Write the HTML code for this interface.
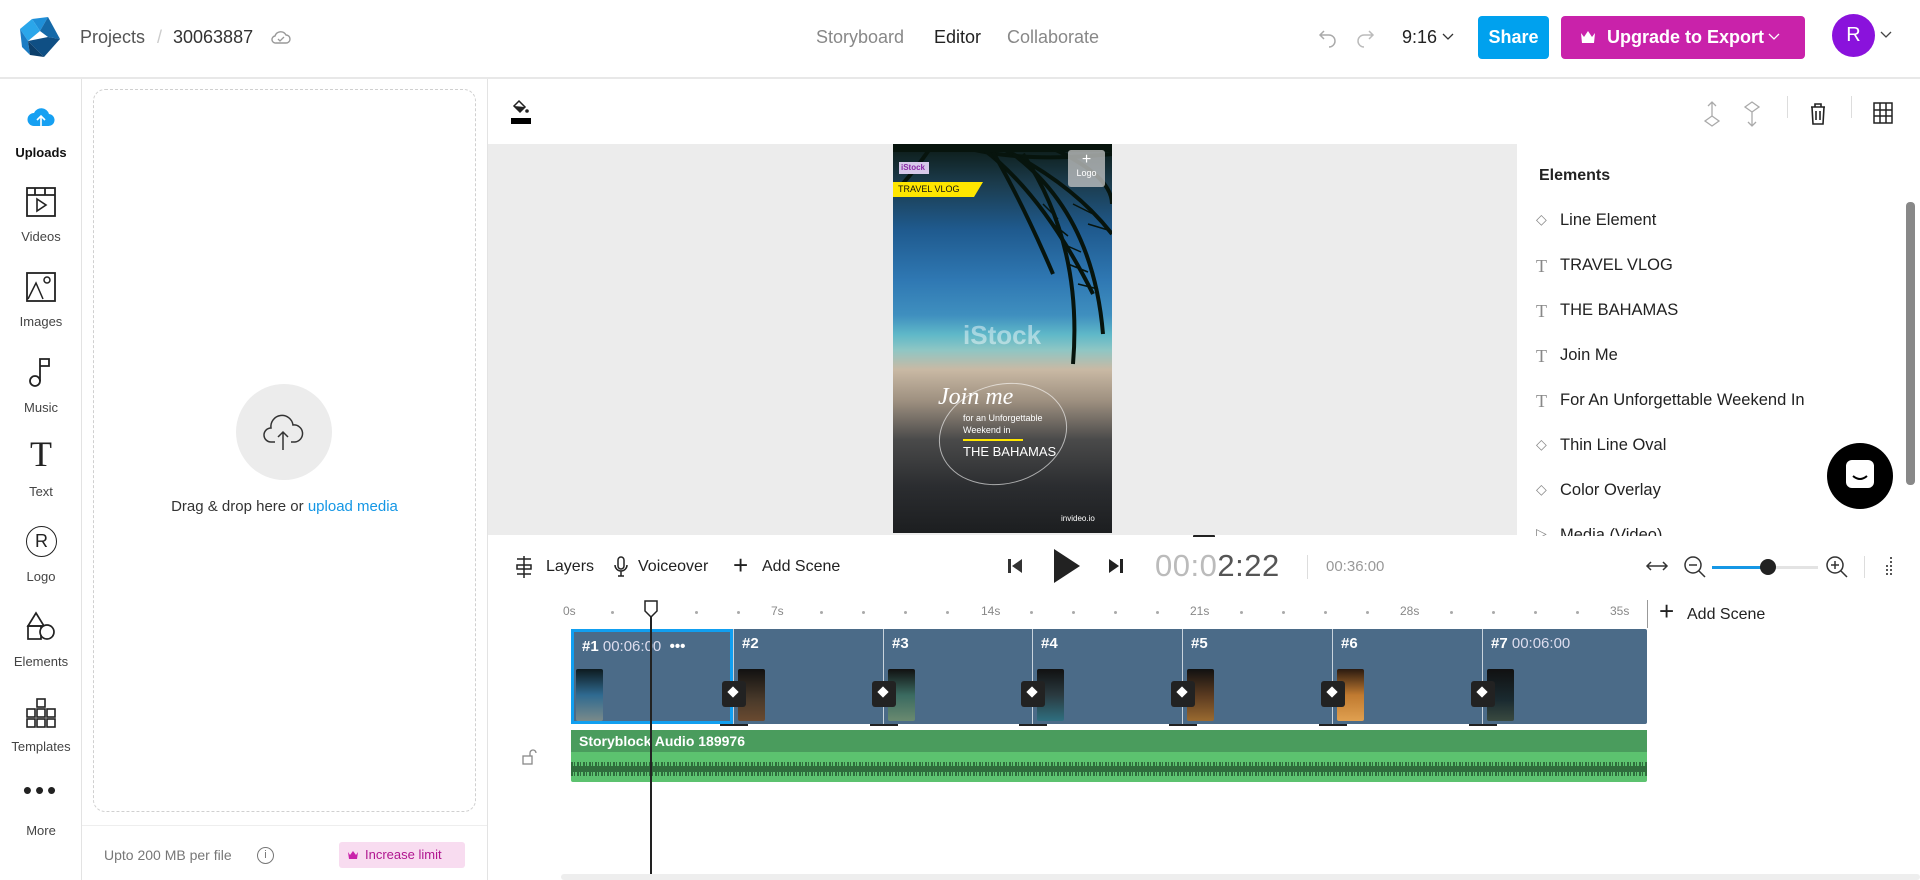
<!DOCTYPE html>
<html><head><meta charset="utf-8"><style>
*{box-sizing:border-box;margin:0;padding:0}
body{width:1920px;height:880px;overflow:hidden;background:#fff;font-family:"Liberation Sans",sans-serif;color:#222;position:relative}
.a{position:absolute}
.hdr{left:0;top:0;width:1920px;height:79px;border-bottom:2px solid #e8e8e8}
.nav{font-size:18px;top:27px}
.side{left:0;top:79px;width:82px;height:801px;border-right:1px solid #e3e3e3}
.si{position:absolute;left:0;width:82px;text-align:center;font-size:13px;color:#444}
.ic{position:absolute;left:25px;width:32px;height:32px}
.el{position:absolute;left:1536px;font-size:16.5px;color:#222}
.el span{position:absolute;left:24px;top:0;white-space:nowrap}
.el i{position:absolute;left:0;top:0;font-style:normal;color:#888;font-family:"Liberation Serif",serif;font-size:18px}
.sc{position:absolute;top:629px;height:95px;border-left:1px solid #c8d3dc;color:#fff;font-weight:bold;font-size:15px}
.sc b{position:absolute;left:8px;top:6px;white-space:nowrap}
.th{position:absolute;top:40px;left:4px;width:27px;height:52px;border-radius:2px}
.ly{position:absolute;top:52px;left:-12px;width:24px;height:26px;background:#222;border-radius:3px}
.ly:after{content:"";position:absolute;left:7px;top:7px;width:8px;height:8px;background:#fff;transform:rotate(45deg)}
.tick{position:absolute;top:724px;width:28px;height:2px;background:#222}
.dot{position:absolute;top:611px;width:3px;height:3px;border-radius:50%;background:#aaa}
.rl{position:absolute;top:604px;font-size:12px;color:#888}
</style></head><body>

<div class="a hdr"></div>
<svg class="a" style="left:18px;top:17px" width="44" height="42" viewBox="0 0 44 42"><path d="M14 2 L30 0 L22 14 Z" fill="#1f8fd8"/><path d="M2 12 L14 2 L22 14 L10 24 Z" fill="#2aa6ea"/><path d="M22 14 L30 0 L42 22 L30 20 Z" fill="#1569a8"/><path d="M10 24 L30 20 L42 22 L26 40 Z" fill="#0f4f84"/><path d="M2 12 L10 24 L12 38 L4 30 Z" fill="#1b7cc4"/><path d="M12 38 L26 40 L10 24 Z" fill="#0c3f6b"/></svg>
<div class="a nav" style="left:80px;color:#555">Projects</div>
<div class="a nav" style="left:157px;color:#ccc">/</div>
<div class="a nav" style="left:173px;color:#333">30063887</div>
<svg class="a" style="left:271px;top:29px" width="20" height="16" viewBox="0 0 20 16"><path d="M5 14 H15 A4 4 0 0 0 15 6 A6 6 0 0 0 4 7 A3.5 3.5 0 0 0 5 14Z" fill="none" stroke="#999" stroke-width="1.4"/><path d="M7 10 L9 12 L13 8" fill="none" stroke="#999" stroke-width="1.3"/></svg>
<div class="a nav" style="left:816px;color:#888">Storyboard</div>
<div class="a nav" style="left:934px;color:#222">Editor</div>
<div class="a nav" style="left:1007px;color:#888">Collaborate</div>
<svg class="a" style="left:1317px;top:27px" width="22" height="22" viewBox="0 0 22 22"><path d="M7 4 L3 8 L7 12 M3 8 H12 A6 6 0 0 1 12 20" fill="none" stroke="#aaa" stroke-width="1.5"/></svg>
<svg class="a" style="left:1354px;top:27px" width="22" height="22" viewBox="0 0 22 22"><path d="M15 4 L19 8 L15 12 M19 8 H10 A6 6 0 0 0 10 20" fill="none" stroke="#bbb" stroke-width="1.5"/></svg>
<div class="a nav" style="left:1402px;color:#222">9:16</div>
<svg class="a" style="left:1442px;top:33px" width="12" height="8"><path d="M1 1 L6 6 L11 1" fill="none" stroke="#333" stroke-width="1.3"/></svg>
<div class="a" style="left:1478px;top:16px;width:71px;height:43px;background:#00a1ee;border-radius:4px;color:#fff;font-weight:bold;font-size:18px;text-align:center;line-height:43px">Share</div>
<div class="a" style="left:1561px;top:16px;width:244px;height:43px;background:#c922aa;border-radius:4px;color:#fff;font-weight:bold;font-size:18px;line-height:43px;padding-left:46px">Upgrade to Export</div>
<svg class="a" style="left:1580px;top:30px" width="16" height="14"><path d="M1 3 L4 7 L8 1 L12 7 L15 3 L14 13 H2 Z" fill="#fff"/></svg>
<svg class="a" style="left:1768px;top:33px" width="12" height="8"><path d="M1 1 L6 6 L11 1" fill="none" stroke="#fff" stroke-width="1.3"/></svg>
<div class="a" style="left:1832px;top:14px;width:43px;height:43px;border-radius:50%;background:#8a12dc;color:#fff;font-size:20px;text-align:center;line-height:43px">R</div>
<svg class="a" style="left:1880px;top:31px" width="12" height="8"><path d="M1 1 L6 6 L11 1" fill="none" stroke="#444" stroke-width="1.3"/></svg>

<div class="a side"></div>
<svg class="ic" style="top:102px" viewBox="0 0 32 32"><path d="M9 24 H23 A6 6 0 0 0 24 12 A8 8 0 0 0 9 11 A6.5 6.5 0 0 0 9 24Z" fill="#16a0f2"/><path d="M16 30 V14 M12 18 L16 14 L20 18" stroke="#fff" stroke-width="1.6" fill="none"/></svg>
<div class="si" style="top:145px;font-weight:bold;color:#111">Uploads</div>
<svg class="ic" style="top:186px" viewBox="0 0 32 32"><rect x="2" y="2" width="28" height="28" fill="none" stroke="#222" stroke-width="1.8"/><path d="M2 9 H30 M10 2 V9 M20 2 V9" stroke="#222" stroke-width="1.8"/><path d="M12 13 L21 19 L12 25Z" fill="none" stroke="#222" stroke-width="1.6"/></svg>
<div class="si" style="top:229px">Videos</div>
<svg class="ic" style="top:271px" viewBox="0 0 32 32"><rect x="2" y="2" width="28" height="28" fill="none" stroke="#222" stroke-width="1.8"/><path d="M3 28 L11 12 L18 28" fill="none" stroke="#222" stroke-width="1.5"/><circle cx="22" cy="9" r="3" fill="none" stroke="#222" stroke-width="1.5"/></svg>
<div class="si" style="top:314px">Images</div>
<svg class="ic" style="top:356px" viewBox="0 0 32 32"><circle cx="10" cy="25" r="5" fill="none" stroke="#222" stroke-width="1.8"/><path d="M15 25 V3 H24 V10 H15" fill="none" stroke="#222" stroke-width="1.8"/></svg>
<div class="si" style="top:400px">Music</div>
<div class="si" style="top:436px;font-family:'Liberation Serif',serif;font-size:36px;color:#222;line-height:36px">T</div>
<div class="si" style="top:484px">Text</div>
<div class="a" style="left:26px;top:526px;width:31px;height:31px;border:1.8px solid #222;border-radius:50%;text-align:center;line-height:28px;font-size:18px">R</div>
<div class="si" style="top:569px">Logo</div>
<svg class="ic" style="top:610px" viewBox="0 0 32 32"><path d="M3 16 L11 3 L19 16Z" fill="none" stroke="#222" stroke-width="1.7"/><rect x="3" y="16" width="13" height="13" fill="none" stroke="#222" stroke-width="1.7"/><circle cx="22" cy="22" r="7" fill="#fff" stroke="#222" stroke-width="1.7"/></svg>
<div class="si" style="top:654px">Elements</div>
<svg class="ic" style="top:697px" viewBox="0 0 32 32"><g fill="none" stroke="#222" stroke-width="1.6"><rect x="12" y="2" width="8" height="8"/><rect x="2" y="12" width="8" height="8"/><rect x="12" y="12" width="8" height="8"/><rect x="22" y="12" width="8" height="8"/><rect x="2" y="22" width="8" height="8"/><rect x="12" y="22" width="8" height="8"/><rect x="22" y="22" width="8" height="8"/></g></svg>
<div class="si" style="top:739px">Templates</div>
<div class="si" style="top:780px;font-size:26px;letter-spacing:3px;color:#222;line-height:20px">•••</div>
<div class="si" style="top:823px">More</div>

<div class="a" style="left:487px;top:79px;width:1px;height:801px;background:#e3e3e3"></div>
<div class="a" style="left:93px;top:89px;width:383px;height:723px;border:1.5px dashed #d0d0d0;border-radius:12px"></div>
<div class="a" style="left:236px;top:384px;width:96px;height:96px;border-radius:50%;background:#ececec"></div>
<svg class="a" style="left:262px;top:412px" width="44" height="40" viewBox="0 0 44 40"><path d="M13 30 H9 A7 7 0 0 1 9 16 A11 11 0 0 1 31 13 A8.5 8.5 0 0 1 33 30 H29" fill="none" stroke="#333" stroke-width="1.5"/><path d="M21 38 V20 M16 25 L21 20 L26 25" fill="none" stroke="#333" stroke-width="1.5"/></svg>
<div class="a" style="left:93px;width:383px;top:498px;text-align:center;font-size:15px;color:#333">Drag &amp; drop here or <span style="color:#1597e5">upload media</span></div>
<div class="a" style="left:82px;top:825px;width:405px;height:1px;background:#eee"></div>
<div class="a" style="left:104px;top:847px;font-size:14px;color:#777">Upto 200 MB per file</div>
<div class="a" style="left:257px;top:847px;width:17px;height:17px;border:1.3px solid #777;border-radius:50%;font-size:11px;text-align:center;line-height:15px;color:#777">i</div>
<div class="a" style="left:339px;top:842px;width:126px;height:26px;background:#f8dcf0;border-radius:3px;font-size:13px;color:#b0168f;line-height:26px;padding-left:26px">Increase limit</div>
<svg class="a" style="left:347px;top:850px" width="12" height="10"><path d="M1 2 L3 5 L6 1 L9 5 L11 2 L10 9 H2Z" fill="#c922aa"/></svg>

<svg class="a" style="left:510px;top:98px" width="22" height="28" viewBox="0 0 22 28"><path d="M9 3 L15 9 L10 14 L4 8Z" fill="none" stroke="#222" stroke-width="1.5"/><path d="M4 8 L10 14 L15 9Z" fill="#222"/><circle cx="17" cy="13" r="1.8" fill="#222"/><rect x="1" y="20" width="20" height="6" fill="#000"/></svg>
<svg class="a" style="left:1700px;top:100px" width="24" height="28" viewBox="0 0 24 28"><path d="M12 16 V2 M8 6 L12 2 L16 6 M12 16 L19 21 L12 26 L5 21Z" fill="none" stroke="#aaa" stroke-width="1.3"/></svg>
<svg class="a" style="left:1740px;top:100px" width="24" height="28" viewBox="0 0 24 28"><path d="M12 12 V26 M8 22 L12 26 L16 22 M12 12 L19 7 L12 2 L5 7Z" fill="none" stroke="#aaa" stroke-width="1.3"/></svg>
<div class="a" style="left:1787px;top:96px;width:1px;height:22px;background:#ddd"></div>
<svg class="a" style="left:1809px;top:102px" width="18" height="24" viewBox="0 0 18 24"><path d="M2 5 H16 M6 5 V2 H12 V5 M3 5 L4 22 H14 L15 5 M7 9 V18 M11 9 V18" fill="none" stroke="#222" stroke-width="1.6"/></svg>
<div class="a" style="left:1851px;top:96px;width:1px;height:22px;background:#ddd"></div>
<svg class="a" style="left:1873px;top:102px" width="20" height="22" viewBox="0 0 20 22"><path d="M1 1 H19 V21 H1Z M7 1 V21 M13 1 V21 M1 8 H19 M1 14 H19" fill="none" stroke="#222" stroke-width="1.5"/></svg>

<div class="a" style="left:488px;top:144px;width:1029px;height:391px;background:#ececec"></div>
<div class="a" style="left:893px;top:144px;width:219px;height:389px;overflow:hidden;background:linear-gradient(180deg,#0c1a14 0%,#1b3b4c 10%,#1f5a8e 22%,#2f78b3 35%,#3f8fbf 44%,#5fb8c8 49%,#8fc6c4 53%,#c9b9a4 58%,#9e9080 66%,#4a4a4a 76%,#2b2d30 88%,#1c1e20 100%)">
 <svg class="a" style="left:0;top:0" width="219" height="230" viewBox="0 0 219 230"><g stroke="#07140d" stroke-width="4" fill="none"><path d="M60 0 Q120 20 219 10"/><path d="M90 5 Q150 50 200 150"/><path d="M100 8 Q130 60 160 130"/><path d="M110 5 Q180 40 219 90"/><path d="M40 0 Q20 30 0 50"/><path d="M120 10 Q200 70 210 190"/><path d="M130 10 Q190 100 180 220"/><path d="M0 0 H219 V6 H0Z" fill="#07140d"/><path d="M150 0 Q219 30 219 60"/></g><g stroke="#07140d" stroke-width="1.5"><path d="M150 60 L165 75 M160 80 L175 92 M170 100 L188 108 M175 120 L195 128 M185 140 L205 145 M180 60 L200 70 M195 80 L215 86"/></g></svg>
 <div class="a" style="left:6px;top:18px;width:30px;height:12px;background:#d7c9ea;font-size:8px;color:#8a2aa6;font-weight:bold;line-height:12px;padding-left:2px">iStock</div>
 <div class="a" style="left:0;top:38px;width:90px;height:15px;background:#ffe600;font-size:9px;color:#111;line-height:15px;padding-left:5px;clip-path:polygon(0 0,100% 0,90% 100%,0 100%)">TRAVEL VLOG</div>
 <div class="a" style="left:175px;top:6px;width:37px;height:37px;background:rgba(200,200,200,.75);border-radius:3px;color:#fff;font-size:9px;text-align:center;line-height:12px;padding-top:4px"><span style="font-size:16px">+</span><br>Logo</div>
 <div class="a" style="left:70px;top:176px;font-size:26px;color:rgba(255,255,255,.45);font-weight:bold">iStock</div>
 <div class="a" style="left:45px;top:240px;width:130px;height:100px;border:1px solid rgba(255,255,255,.6);border-radius:50%;transform:rotate(-15deg)"></div>
 <div class="a" style="left:45px;top:240px;font-family:'Liberation Serif',serif;font-style:italic;font-size:24px;color:#fff">Join me</div>
 <div class="a" style="left:70px;top:268px;font-size:9px;color:#fff;line-height:12px">for an Unforgettable<br>Weekend in</div>
 <div class="a" style="left:70px;top:295px;width:60px;height:2px;background:#ffe600"></div>
 <div class="a" style="left:70px;top:300px;font-size:13px;color:#fff">THE BAHAMAS</div>
 <div class="a" style="left:168px;top:370px;font-size:8px;color:#fff">invideo.io</div>
</div>
<div class="a" style="left:1193px;top:535px;width:22px;height:4px;background:#222;border-radius:1px"></div>

<div class="a" style="left:1539px;top:167px;font-size:16px;font-weight:bold;color:#222">Elements</div>
<div class="el" style="top:211px"><i style="font-size:14px;top:1px">◇</i><span>Line Element</span></div>
<div class="el" style="top:256px"><i>T</i><span>TRAVEL VLOG</span></div>
<div class="el" style="top:301px"><i>T</i><span>THE BAHAMAS</span></div>
<div class="el" style="top:346px"><i>T</i><span>Join Me</span></div>
<div class="el" style="top:391px"><i>T</i><span>For An Unforgettable Weekend In</span></div>
<div class="el" style="top:436px"><i style="font-size:14px;top:1px">◇</i><span>Thin Line Oval</span></div>
<div class="el" style="top:481px"><i style="font-size:14px;top:1px">◇</i><span>Color Overlay</span></div>
<div class="a" style="left:1517px;top:526px;width:390px;height:10px;overflow:hidden"><div class="el" style="left:19px;top:0"><i style="font-size:14px">▷</i><span>Media (Video)</span></div></div>
<div class="a" style="left:1906px;top:202px;width:9px;height:283px;background:#888;border-radius:4px"></div>
<div class="a" style="left:1827px;top:443px;width:66px;height:66px;border-radius:50%;background:#000"></div>
<svg class="a" style="left:1844px;top:458px" width="32" height="34" viewBox="0 0 32 34"><rect x="2" y="2" width="28" height="28" rx="6" fill="#fff"/><path d="M9 18 Q16 24 23 18" stroke="#000" stroke-width="2" fill="none"/></svg>

<div class="a" style="left:488px;top:537px;width:1432px;height:343px;background:#fff"></div>
<svg class="a" style="left:514px;top:555px" width="20" height="24" viewBox="0 0 20 24"><path d="M10 1 V23 M3 4 H17 M3 10 H17 V14 H3Z M3 19 H17" fill="none" stroke="#222" stroke-width="1.5"/></svg>
<div class="a" style="left:546px;top:558px;font-size:16px">Layers</div>
<svg class="a" style="left:613px;top:555px" width="16" height="24" viewBox="0 0 16 24"><rect x="5" y="2" width="6" height="12" rx="3" fill="none" stroke="#222" stroke-width="1.5"/><path d="M2 10 A6 6 0 0 0 14 10 M8 16 V21 M5 21 H11" fill="none" stroke="#222" stroke-width="1.5"/></svg>
<div class="a" style="left:638px;top:558px;font-size:16px">Voiceover</div>
<div class="a" style="left:733px;top:550px;font-size:26px;font-weight:300">+</div>
<div class="a" style="left:762px;top:558px;font-size:16px">Add Scene</div>
<svg class="a" style="left:1007px;top:557px" width="16" height="18"><rect x="1" y="2" width="3" height="14" fill="#333"/><path d="M15 2 L5 9 L15 16Z" fill="#333"/></svg>
<svg class="a" style="left:1052px;top:548px" width="30" height="36"><path d="M2 1 L28 18 L2 35Z" fill="#222"/></svg>
<svg class="a" style="left:1108px;top:557px" width="16" height="18"><path d="M1 2 L11 9 L1 16Z" fill="#222"/><rect x="12" y="2" width="3" height="14" fill="#222"/></svg>
<div class="a" style="left:1155px;top:548px;font-size:31px;color:#bbb;letter-spacing:0.5px">00:0<span style="color:#555">2:22</span></div>
<div class="a" style="left:1307px;top:555px;width:1px;height:24px;background:#ddd"></div>
<div class="a" style="left:1326px;top:558px;font-size:15px;color:#999">00:36:00</div>
<svg class="a" style="left:1645px;top:558px" width="24" height="16"><path d="M2 8 H22 M6 4 L2 8 L6 12 M18 4 L22 8 L18 12" fill="none" stroke="#333" stroke-width="1.5"/></svg>
<svg class="a" style="left:1683px;top:555px" width="24" height="24"><circle cx="10" cy="10" r="8" fill="none" stroke="#333" stroke-width="1.5"/><path d="M6 10 H14 M16 16 L22 22" stroke="#333" stroke-width="1.5"/></svg>
<div class="a" style="left:1712px;top:566px;width:56px;height:3px;background:#1597e5"></div>
<div class="a" style="left:1768px;top:566px;width:50px;height:3px;background:#e3e3e3"></div>
<div class="a" style="left:1760px;top:559px;width:16px;height:16px;border-radius:50%;background:#222"></div>
<svg class="a" style="left:1825px;top:555px" width="24" height="24"><circle cx="10" cy="10" r="8" fill="none" stroke="#333" stroke-width="1.5"/><path d="M6 10 H14 M10 6 V14 M16 16 L22 22" stroke="#333" stroke-width="1.5"/></svg>
<div class="a" style="left:1864px;top:556px;width:1px;height:22px;background:#ddd"></div>
<svg class="a" style="left:1884px;top:557px" width="10" height="20"><g fill="#555"><rect x="6" y="0" width="2" height="2"/><rect x="6" y="4" width="2" height="2"/><rect x="2" y="8" width="2" height="2"/><rect x="6" y="8" width="2" height="2"/><rect x="2" y="12" width="2" height="2"/><rect x="6" y="12" width="2" height="2"/><rect x="2" y="16" width="2" height="2"/><rect x="6" y="16" width="2" height="2"/></g></svg>

<div class="rl" style="left:563px">0s</div>
<div class="rl" style="left:771px">7s</div>
<div class="rl" style="left:981px">14s</div>
<div class="rl" style="left:1190px">21s</div>
<div class="rl" style="left:1400px">28s</div>
<div class="rl" style="left:1610px">35s</div>
<div class="dot" style="left:611px"></div><div class="dot" style="left:695px"></div><div class="dot" style="left:737px"></div>
<div class="dot" style="left:820px"></div><div class="dot" style="left:862px"></div><div class="dot" style="left:904px"></div><div class="dot" style="left:946px"></div>
<div class="dot" style="left:1030px"></div><div class="dot" style="left:1072px"></div><div class="dot" style="left:1114px"></div><div class="dot" style="left:1156px"></div>
<div class="dot" style="left:1240px"></div><div class="dot" style="left:1282px"></div><div class="dot" style="left:1324px"></div><div class="dot" style="left:1366px"></div>
<div class="dot" style="left:1450px"></div><div class="dot" style="left:1492px"></div><div class="dot" style="left:1534px"></div><div class="dot" style="left:1576px"></div>
<div class="a" style="left:1647px;top:600px;width:1px;height:28px;background:#999"></div>
<div class="a" style="left:1659px;top:596px;font-size:26px;font-weight:300">+</div>
<div class="a" style="left:1687px;top:606px;font-size:16px">Add Scene</div>

<div class="a" style="left:571px;top:629px;width:1076px;height:95px;background:#4b6b88;border-radius:2px"></div>
<div class="sc" style="left:571px;width:162px;border:3px solid #119ff0"><b>#1 <span style="font-weight:normal;color:#dde">00:06:00</span> &nbsp;•••</b><div class="th" style="left:2px;top:37px;background:linear-gradient(#0d1a1e,#2f6a90 50%,#7a8a8a)"></div></div>
<div class="sc" style="left:733px;width:150px"><b>#2</b><div class="th" style="background:linear-gradient(#111,#4a3a2a 60%,#6a4a30)"></div><div class="ly"></div></div>
<div class="sc" style="left:883px;width:149px"><b>#3</b><div class="th" style="background:linear-gradient(#111,#3a6a60 50%,#6a8a70)"></div><div class="ly"></div></div>
<div class="sc" style="left:1032px;width:150px"><b>#4</b><div class="th" style="background:linear-gradient(#111,#2a3a40 50%,#2f6f80)"></div><div class="ly"></div></div>
<div class="sc" style="left:1182px;width:150px"><b>#5</b><div class="th" style="background:linear-gradient(#111,#5a3a20 50%,#9a6a30)"></div><div class="ly"></div></div>
<div class="sc" style="left:1332px;width:150px"><b>#6</b><div class="th" style="background:linear-gradient(#2a1a10,#c07a30 50%,#e0a050)"></div><div class="ly"></div></div>
<div class="sc" style="left:1482px;width:165px"><b>#7 <span style="font-weight:normal;color:#dde">00:06:00</span></b><div class="th" style="background:linear-gradient(#111,#1a2a30 60%,#3a4a40)"></div><div class="ly"></div></div>
<div class="tick" style="left:720px"></div><div class="tick" style="left:870px"></div><div class="tick" style="left:1019px"></div><div class="tick" style="left:1169px"></div><div class="tick" style="left:1319px"></div><div class="tick" style="left:1469px"></div>

<div class="a" style="left:571px;top:730px;width:1076px;height:52px;background:#5cc26f;border-radius:2px"></div>
<div class="a" style="left:571px;top:730px;width:1076px;height:22px;background:#4a9c5d"></div>
<div class="a" style="left:579px;top:733px;font-size:14px;font-weight:bold;color:#fff">Storyblock Audio 189976</div>
<div class="a" style="left:571px;top:762px;width:1076px;height:14px;background:repeating-linear-gradient(90deg,#2f6e3c 0 2px,transparent 2px 3px,#2f6e3c 3px 4px,transparent 4px 6px)"></div>
<div class="a" style="left:571px;top:766px;width:1076px;height:6px;background:#2f6e3c"></div>
<svg class="a" style="left:521px;top:748px" width="16" height="18"><rect x="2" y="8" width="9" height="8" fill="none" stroke="#888" stroke-width="1.3"/><path d="M9 8 V5 A3 3 0 0 1 15 5" fill="none" stroke="#888" stroke-width="1.3"/></svg>

<div class="a" style="left:650px;top:612px;width:1.5px;height:262px;background:#222"></div>
<svg class="a" style="left:644px;top:600px" width="14" height="18"><path d="M1 1 H13 V11 L7 17 L1 11Z" fill="#fff" stroke="#222" stroke-width="1.5"/></svg>
<div class="a" style="left:561px;top:874px;width:1359px;height:6px;background:#eee;border-radius:3px"></div>
</body></html>
